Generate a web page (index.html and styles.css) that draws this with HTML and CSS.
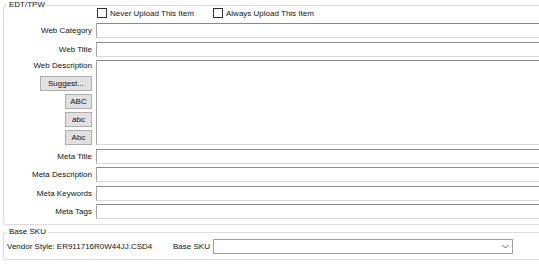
FILE: index.html
```html
<!DOCTYPE html>
<html>
<head>
    <title>EDT/TPW</title>
    <link rel="stylesheet" href="styles.css">
</head>
<body>
    <fieldset class="group">
        <legend>EDT/TPW</legend>
        <div class="check-row">
            <label class="check first"><span class="box"></span>Never Upload This Item</label>
            <label class="check"><span class="box"></span>Always Upload This Item</label>
        </div>

        <div class="rows">
            <div class="row">
                <span class="lbl">Web Category</span>
                <div class="field"></div>
            </div>
            <div class="row">
                <span class="lbl">Web Title</span>
                <div class="field"></div>
            </div>
            <div class="row top">
                <div class="side">
                    <span class="lbl-top">Web Description</span>
                    <button class="btn btn-suggest">Suggest...</button>
                    <button class="btn btn-case">ABC</button>
                    <button class="btn btn-case">abc</button>
                    <button class="btn btn-case">Abc</button>
                </div>
                <div class="field area"></div>
            </div>
            <div class="row">
                <span class="lbl">Meta Title</span>
                <div class="field"></div>
            </div>
            <div class="row">
                <span class="lbl">Meta Description</span>
                <div class="field"></div>
            </div>
            <div class="row">
                <span class="lbl">Meta Keywords</span>
                <div class="field"></div>
            </div>
            <div class="row">
                <span class="lbl">Meta Tags</span>
                <div class="field"></div>
            </div>
        </div>
    </fieldset>

    <!-- Base SKU -->
    <fieldset class="group sku">
        <legend>Base SKU</legend>
        <div class="sku-row">
            <span class="vendor">Vendor Style: ER911716R0W44JJ.CSD4</span>
            <span class="sku-lbl">Base SKU</span>
            <div class="combo">
                <svg class="chev" width="7" height="5" viewBox="0 0 7 5">
                    <polyline points="0.5,1 3.5,4 6.5,1" fill="none" stroke="#6a6a6a" stroke-width="1"/>
                </svg>
            </div>
        </div>
    </fieldset>
</body>
</html>
```
FILE: styles.css
```css
body {
    margin: 0;
    background: #ffffff;
    font-family: "Liberation Sans", Arial, sans-serif;
    font-size: 8px;
    color: #111111;
}

.group {
    margin: 1px 0 0 3px;
    padding: 0 0 5px 0;
    border: 1px solid #dcdcdc;
    border-right: none;
    border-radius: 3px 0 0 3px;
    min-width: 0;
}

.group legend {
    margin-left: 3px;
    padding: 0 2px;
    line-height: 8px;
}

.check-row {
    display: flex;
    align-items: center;
    margin-top: -1px;
    padding-left: 93px;
    height: 10px;
}

.check {
    display: flex;
    align-items: center;
    gap: 3px;
}

.check.first {
    width: 116px;
}

.box {
    width: 8px;
    height: 8px;
    border: 1px solid #333333;
    background: #ffffff;
}

.rows {
    display: flex;
    flex-direction: column;
    gap: 3.5px;
    margin-top: 5px;
}

.row {
    display: flex;
    align-items: center;
    gap: 4px;
}

.row.top {
    align-items: stretch;
}

.lbl {
    width: 88px;
    text-align: right;
}

.field {
    flex: 1;
    height: 13px;
    background: #ffffff;
    border-top: 1px solid #8a8a8a;
    border-left: 1px solid #a8a8a8;
    border-bottom: 1px solid #d8d8d8;
}

.field.area {
    height: 83px;
}

.side {
    width: 88px;
    display: flex;
    flex-direction: column;
    align-items: flex-end;
    gap: 3px;
}

.lbl-top {
    line-height: 12px;
    margin-bottom: 1px;
}

.btn {
    height: 15px;
    padding: 0;
    background: #e1e1e1;
    border: 1px solid #adadad;
    font-family: "Liberation Sans", Arial, sans-serif;
    font-size: 8px;
    color: #111111;
}

.btn-suggest {
    width: 52px;
}

.btn-case {
    width: 27px;
}

.sku {
    margin-top: 3px;
}

.sku-row {
    display: flex;
    align-items: center;
    margin-top: 3px;
    padding-left: 3px;
}

.vendor {
    width: 166px;
}

.sku-lbl {
    width: 40px;
}

.combo {
    width: 298px;
    height: 13px;
    border: 1px solid #a0a0a0;
    background: #ffffff;
    display: flex;
    align-items: center;
    justify-content: flex-end;
}

.chev {
    margin-right: 3px;
}
```
